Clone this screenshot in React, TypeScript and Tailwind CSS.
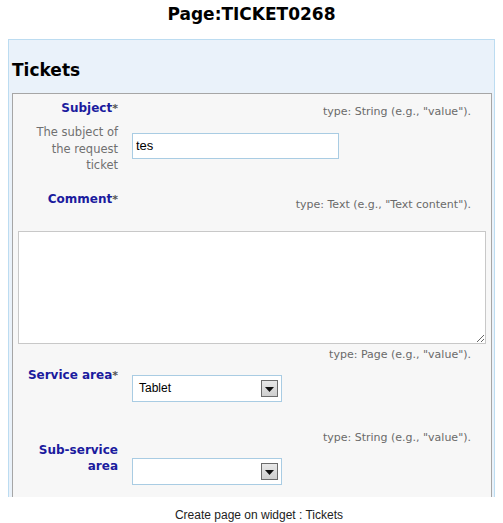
// Ticket page form widget
const label =
  "font-['DejaVu_Sans',sans-serif] text-[12px] font-bold leading-[16px] text-[#1b1b9e]";
const hint =
  "font-['DejaVu_Sans',sans-serif] text-[11px] leading-[14px] text-[#6a6a6a] text-right";

function Req() {
  return <span className="text-[#555] text-[11px]">*</span>;
}

function FakeSelect({ value }: { value?: string }) {
  return (
    <div className="flex h-[27px] w-[150px] items-center justify-between border border-[#a9cce3] bg-white pl-[6px] pr-[3px]">
      <span className="font-['Liberation_Sans',Arial,sans-serif] text-[12px] text-black">
        {value}
      </span>
      <div className="flex h-[17px] w-[17px] items-center justify-center border border-[#6b6b6b] bg-gradient-to-b from-[#e8e8e8] to-[#cfcfcf]">
        <svg width="9" height="5" viewBox="0 0 9 5" className="mt-[2px]">
          <path d="M0 0 H9 L4.5 5 Z" fill="#111" />
        </svg>
      </div>
    </div>
  );
}

export default function App() {
  return (
    <div className="h-[523px] w-[503px] overflow-hidden bg-white">
      <div className="h-[39px] pt-[4px] text-center font-['DejaVu_Sans',sans-serif] text-[17px] font-bold leading-[20px] text-black">
        Page:TICKET0268
      </div>

      <div className="mx-2 h-[458px] overflow-hidden border border-b-0 border-[#bcdcf1] bg-[#eaf2fa] pl-[3px] pr-[2px] pt-[20px]">
        <h2 className="mb-[13px] font-['DejaVu_Sans',sans-serif] text-[17px] font-bold leading-[20px] text-black">
          Tickets
        </h2>

        <div className="h-[500px] border border-b-0 border-[#a6a6a6] bg-[#f7f7f7]">
          {/* Subject */}
          <div className="flex h-[30px]">
            <div className={`w-[105px] pt-[6px] text-right ${label}`}>
              Subject<Req />
            </div>
            <div className={`ml-[14px] w-[339px] pt-[11px] ${hint}`}>
              type: String (e.g., "value").
            </div>
          </div>
          <div className="flex">
            <div className="w-[105px] text-right font-['DejaVu_Sans',sans-serif] text-[11.5px] leading-[16.5px] text-[#707070]">
              The subject of
              <br />
              the request
              <br />
              ticket
            </div>
            <div className="ml-[14px] pt-[8px]">
              <input
                readOnly
                value="tes"
                className="h-[26px] w-[207px] border border-[#a9cce3] bg-white px-[3px] font-['Liberation_Sans',Arial,sans-serif] text-[13px] text-black outline-none"
              />
            </div>
          </div>

          {/* Comment */}
          <div className="flex h-[38px]">
            <div className={`w-[105px] pt-[17px] text-right ${label}`}>
              Comment<Req />
            </div>
            <div className={`ml-[14px] w-[339px] pt-[24px] ${hint}`}>
              type: Text (e.g., "Text content").
            </div>
          </div>
          <div className="px-[5px] pt-[19px]">
            <textarea
              readOnly
              className="block h-[113px] w-full resize-y border border-[#c8c8c8] bg-white outline-none"
            />
          </div>

          {/* Service area */}
          <div className={`ml-[119px] w-[339px] pt-[4px] ${hint}`}>
            type: Page (e.g., "value").
          </div>
          <div className="flex">
            <div className={`w-[105px] pt-[5px] text-right ${label}`}>
              Service area<Req />
            </div>
            <div className="ml-[14px] pt-[13px]">
              <FakeSelect value="Tablet" />
            </div>
          </div>

          {/* Sub-service area */}
          <div className="mt-[29px] flex">
            <div className={`w-[105px] pt-[11px] text-right ${label}`}>
              Sub-service
              <br />
              area
            </div>
            <div className="ml-[14px] w-[339px]">
              <div className={hint}>type: String (e.g., "value").</div>
              <div className="pt-[13px]">
                <FakeSelect />
              </div>
            </div>
          </div>
        </div>
      </div>

      <div className="mt-[11px] pl-[15px] text-center font-['Liberation_Sans',Arial,sans-serif] text-[12px] leading-[14px] text-[#222]">
        Create page on widget : Tickets
      </div>
    </div>
  );
}
